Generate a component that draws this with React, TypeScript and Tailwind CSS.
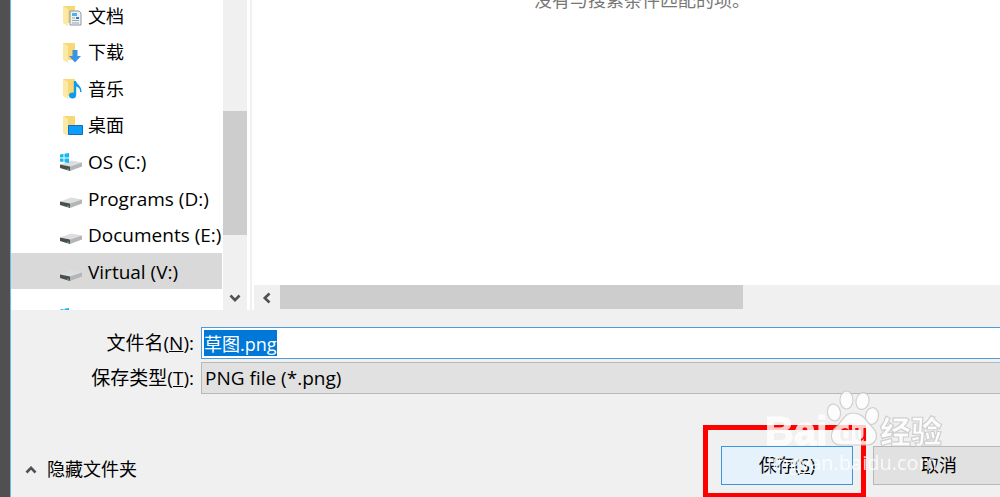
import { useEffect, useRef } from "react";

const folders = [
  { label: "文档", kind: "doc" },
  { label: "下载", kind: "down" },
  { label: "音乐", kind: "music" },
  { label: "桌面", kind: "desktop" },
];

const drives = [
  { label: "OS (C:)", system: true, active: false },
  { label: "Programs (D:)", system: false, active: false },
  { label: "Documents (E:)", system: false, active: false },
  { label: "Virtual (V:)", system: false, active: true },
];

function FolderIcon({ kind }: { kind: string }) {
  return (
    <svg width="22" height="22" viewBox="0 0 22 22" aria-hidden="true">
      <path d="M1 1h12v17H1z" fill="#f8d775" />
      <path d="M1 1l5 3v17l-5-3z" fill="#fde9a6" />
      {kind === "doc" && (
        <g>
          <path d="M8 6h9l2 2v12H8z" fill="#eef2f5" stroke="#8e979e" />
          <path d="M10 8h5v3h-5z" fill="#58aee6" />
          <path d="M10 13h3M10 15.500h7M10 18h7" stroke="#9aa7b1" />
          <path d="M14 12h3v2h-3z" fill="#2c7fc0" />
        </g>
      )}
      {kind === "down" && (
        <path d="M10.500 8h5v6H19l-6 6.500L7 14h3.500z" fill="#3a94e2" />
      )}
      {kind === "music" && (
        <g fill="#0c9bee">
          <ellipse cx="10.500" cy="17.500" rx="3.500" ry="2.900" />
          <path d="M11.800 3H14c.5 3.500 6 5 5.500 11H18c.4-3-1.500-5-3.800-5.500v9h-2.400z" />
        </g>
      )}
      {kind === "desktop" && (
        <path d="M6.500 10.500h14v9h-14z" fill="#0d9dfc" stroke="#0a6fc0" />
      )}
    </svg>
  );
}

function DriveIcon({ system }: { system: boolean }) {
  return (
    <svg width="22" height="18" viewBox="0 0 22 18" className="shrink-0" aria-hidden="true">
      <path d="M0 11.500L11 7.500l11 2-12 4z" fill="#dcdddf" />
      <path d="M0 11.500l10 2V18L0 15z" fill="#4b4d4e" />
      <path d="M10 13.500l12-4v4L10 18z" fill="#b3b5b8" />
      <path d="M7 15.500l2 .5v1l-2-.5z" fill="#4fc24f" />
      {system && (
        <path
          d="M0 1.600L3.500 1v3.600H0zM4.500.8L9 0v4.600H4.500zM0 5.500h3.500v3.600L0 8.500zM4.500 5.500H9V10l-4.500-.8z"
          fill="#12b7f3"
        />
      )}
    </svg>
  );
}

function Chevron({ className }: { className: string }) {
  return (
    <svg width="12" height="12" viewBox="0 0 12 12" className={className} aria-hidden="true">
      <path d="M1.500 3.500L6 8.200l4.500-4.700" fill="none" stroke="#505050" strokeWidth="2.600" />
    </svg>
  );
}

function Watermark() {
  return (
    <div
      className="pointer-events-none absolute right-[55px] bottom-[20px] w-[178px] text-white opacity-80"
      aria-hidden="true"
    >
      <svg
        width="178"
        height="60"
        viewBox="0 0 178 60"
        className="overflow-visible"
        fill="#fff"
        stroke="#c8c8c8"
        strokeWidth="1.200"
      >
        <mask id="paw-cut" stroke="none">
          <path d="M60 18h52v45H60z" fill="#fff" />
          <text x="72" y="52" fontSize="24" fontWeight="700" fontFamily="Liberation Sans" fill="#000">du</text>
        </mask>
        <ellipse cx="79.500" cy="11" rx="6.500" ry="9" />
        <ellipse cx="95.500" cy="12" rx="6.500" ry="8.500" transform="rotate(12 95.500 12)" />
        <ellipse cx="67" cy="23.500" rx="6.500" ry="8.500" transform="rotate(-12 67 23.500)" />
        <ellipse cx="105" cy="27" rx="6.500" ry="8.500" transform="rotate(10 105 27)" />
        <path
          d="M86 24c-9 0-10 8-17 14-8 7-5 18 5 18h26c10 0 12-11 6-17-7-7-10-15-20-15z"
          mask="url(#paw-cut)"
        />
        <text x="-2" y="56" fontSize="40" fontWeight="700" fontFamily="Liberation Sans" stroke="#fff">Bai</text>
        <text x="113" y="54" fontSize="31" fontWeight="900" fontFamily="Noto Sans CJK SC, sans-serif">经验</text>
      </svg>
      <p className="font-['Open_Sans'] text-[20px] leading-[28px]">jingyan.baidu.com</p>
    </div>
  );
}

export default function App() {
  const nameRef = useRef<HTMLInputElement>(null);

  useEffect(() => {
    nameRef.current?.focus();
    nameRef.current?.select();
  }, []);

  return (
    <div className="flex h-screen overflow-clip bg-[#f0f0f0] font-['Open_Sans','Noto_Sans_CJK_SC',sans-serif] text-[18px] text-black">
      <div className="w-[10px] shrink-0 bg-[#505050]" />
      <main className="relative flex min-w-0 flex-1 flex-col border-l border-[#6db9ea]">
        <div className="flex h-[310px] shrink-0 overflow-clip bg-white">
          <nav className="w-[211px] shrink-0">
            <ul className="-mt-[3px] grid h-[292px] auto-rows-fr">
              {folders.map((f) => (
                <li key={f.label} className="flex items-center gap-1 pt-0.5 pl-[51px]">
                  <FolderIcon kind={f.kind} />
                  <span>{f.label}</span>
                </li>
              ))}
              {drives.map((d) => (
                <li
                  key={d.label}
                  className={
                    d.active
                      ? "flex items-center gap-1.5 bg-[#d9d9d9] pt-0.5 pl-[49px] text-[19px] whitespace-nowrap"
                      : "flex items-center gap-1.5 pt-0.5 pl-[49px] text-[19px] whitespace-nowrap"
                  }
                >
                  <DriveIcon system={d.system} />
                  <span>{d.label}</span>
                </li>
              ))}
            </ul>
            {/* next entry, scrolled almost out of view */}
            <div className="pt-[19px] pl-[49px]">
              <DriveIcon system />
            </div>
          </nav>
          <div className="ml-px flex w-6 shrink-0 flex-col items-center bg-[#f0f0f0]">
            <div className="mt-[111px] h-[124px] w-full bg-[#cdcdcd]" />
            <Chevron className="mt-auto mb-1.5" />
          </div>
          <div className="ml-[3px] w-0.5 shrink-0 bg-[#f0f0f0]" />
          <section className="ml-0.5 flex min-w-0 flex-1 flex-col justify-between">
            <p className="-mt-3.5 pl-[280px] leading-[28px] text-[#777777]">没有与搜索条件匹配的项。</p>
            <div className="flex h-[25px] bg-[#f0f0f0]">
              <div className="flex w-[26px] items-center justify-center">
                <Chevron className="rotate-90" />
              </div>
              <div className="h-6 w-[62%] bg-[#cdcdcd]" />
            </div>
          </section>
        </div>

        <form className="flex flex-1 flex-col" onSubmit={(e) => e.preventDefault()}>
          <div className="mt-[17px] -mr-0.5 grid grid-cols-[183px_1fr] items-center gap-x-[7px] gap-y-[3px]">
            <label htmlFor="file-name" className="text-right text-[19px]">
              文件名(<u>N</u>):
            </label>
            <input
              ref={nameRef}
              id="file-name"
              defaultValue="草图.png"
              className="h-8 min-w-0 border border-[#4a9be0] bg-white pl-0.5 leading-[25px] outline-none selection:bg-[#0078d7] selection:text-white"
            />
            <label htmlFor="file-type" className="text-right text-[19px]">
              保存类型(<u>T</u>):
            </label>
            <select
              id="file-type"
              className="h-8 min-w-0 appearance-none border border-[#b8b8b8] bg-[#e1e1e1] pl-[3px] text-[19px]"
            >
              <option>PNG file (*.png)</option>
            </select>
          </div>
          <div className="-mr-[5px] mt-auto mb-3 flex items-end">
            <button type="button" className="mb-0.5 flex items-center gap-2.5 pl-3.5">
              <Chevron className="rotate-180" />
              隐藏文件夹
            </button>
            <div className="relative mr-5 ml-auto">
              <button type="submit" className="h-[39px] w-[132px] border border-[#3c96dc] bg-[#e5f1fb]">
                保存(<u>S</u>)
              </button>
              <div className="pointer-events-none absolute -top-[21px] -right-[13px] -bottom-[13px] -left-[18px] border-[5px] border-[#ff0000]" />
            </div>
            <button type="button" className="h-[39px] w-[132px] border border-[#b8b8b8] bg-[#e1e1e1]">
              取消
            </button>
          </div>
        </form>
        <Watermark />
      </main>
    </div>
  );
}
